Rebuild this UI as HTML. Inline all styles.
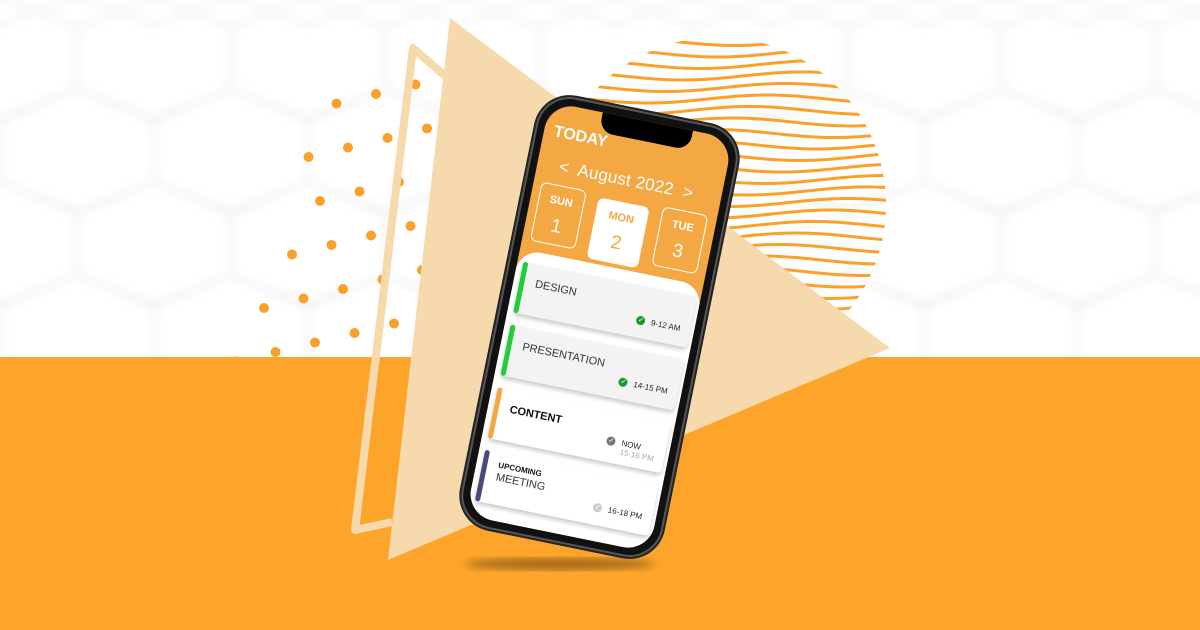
<!DOCTYPE html>
<html><head><meta charset="utf-8">
<style>
*{margin:0;padding:0;box-sizing:border-box}
body{width:1200px;height:630px;overflow:hidden;background:#fff;position:relative;font-family:"Liberation Sans",sans-serif}
svg.bg{position:absolute;left:0;top:0}
.phone{position:absolute;left:497px;top:107px;width:205px;height:440px;border-radius:34px;background:#111;border:2px solid #555;transform:rotate(11.5deg);box-shadow:0 0 0 2px #222}
.screen{position:absolute;left:7px;top:7px;right:7px;bottom:7px;border-radius:27px;overflow:hidden;background:#f3a844}
.notch{position:absolute;left:50%;top:-2px;width:92px;height:22px;margin-left:-40px;background:#000;border-radius:0 0 14px 14px}
.today{position:absolute;left:10px;top:20px;color:#fff;font-weight:bold;font-size:16px}
.month{position:absolute;left:22px;top:52px;color:#fff;font-size:17px;font-weight:300;letter-spacing:0.2px}
.day{position:absolute;top:80px;width:46px;height:60px;border:1px solid #fff;border-radius:6px;color:#fff;text-align:center}
.day b{display:block;font-size:11px;margin-top:9px}
.day span{display:block;font-size:19px;margin-top:9px}
.mon{background:#fff;color:#f3a844;top:84px;height:62px;width:52px}
.list{position:absolute;left:0;right:0;top:150px;bottom:0;background:#fff;border-radius:22px 22px 0 0}
.card{position:absolute;left:6px;right:4px;height:52px;background:#f3f3f3;border-radius:4px;box-shadow:0 3px 4px rgba(0,0,0,.2);font-size:11px;color:#333}
.card.w{background:#fff}
.bar{position:absolute;left:0;top:0;bottom:0;width:5px;border-radius:3px}
.t{position:absolute;left:16px;top:14px}
.r{position:absolute;right:10px;top:30px;font-size:8px;color:#222}
.ck{display:inline-block;width:9px;height:9px;border-radius:50%;background:#1a9a2e;color:#fff;font-size:7px;line-height:9px;text-align:center;margin-right:6px;vertical-align:middle}
</style></head><body>
<svg class="bg" width="1200" height="630" viewBox="0 0 1200 630">
<defs>
<filter id="bl"><feGaussianBlur stdDeviation="5"/></filter>
<filter id="bl2"><feGaussianBlur stdDeviation="4"/></filter>
<clipPath id="wc"><circle cx="718" cy="205" r="168"/></clipPath>
<clipPath id="top"><rect x="0" y="0" width="1200" height="357"/></clipPath>
</defs>
<g id="hex" clip-path="url(#top)" fill="none" stroke="#f1f1f1" stroke-width="4" filter="url(#bl)"></g>
<g id="wav" clip-path="url(#wc)" fill="none" stroke="#f9a12a" stroke-width="3"></g>
<g id="dots" fill="#f9a12a"></g>
<rect x="0" y="357" width="1200" height="273" fill="#fda52a"/>
<polygon points="450,18 890,348 388,560" fill="#f6d9ac"/>
<polyline points="452,82 413,48 355,530 392,522" fill="none" stroke="#f6d9ac" stroke-width="8" stroke-linejoin="round"/>
<ellipse cx="560" cy="564" rx="95" ry="6" fill="#000" opacity=".35" filter="url(#bl2)"/>
</svg>
<div class="phone"><div class="screen">
<div class="notch"></div>
<div class="today">TODAY</div>
<div class="month">&lt;&nbsp; August 2022 &nbsp;&gt;</div>
<div class="day" style="left:8px"><b>SUN</b><span>1</span></div>
<div class="day mon" style="left:67px"><b>MON</b><span>2</span></div>
<div class="day" style="left:132px"><b>TUE</b><span>3</span></div>
<div class="list">
<div class="card" style="top:12px"><div class="bar" style="background:#22cc3a"></div><div class="t">DESIGN</div><div class="r"><span class="ck">✓</span>9-12 AM</div></div>
<div class="card" style="top:76px"><div class="bar" style="background:#22cc3a"></div><div class="t">PRESENTATION</div><div class="r"><span class="ck">✓</span>14-15 PM</div></div>
<div class="card w" style="top:140px"><div class="bar" style="background:#f3a844"></div><div class="t" style="font-weight:bold;color:#111">CONTENT</div><div class="r" style="top:26px"><span class="ck" style="background:#777">✓</span>NOW<br><span style="color:#aaa;margin-left:15px">15-16 PM</span></div></div>
<div class="card w" style="top:204px"><div class="bar" style="background:#4a4a7a"></div><div class="t" style="top:6px;line-height:13px"><b style="font-size:8px;color:#111">UPCOMING</b><br>MEETING</div><div class="r"><span class="ck" style="background:#ccc">✓</span>16-18 PM</div></div>
</div>
</div></div>
<script>
var ns="http://www.w3.org/2000/svg";
var hg=document.getElementById("hex");
for(var j=-1;j<6;j++)for(var i=-1;i<9;i++){var cx=154+i*154+(j%2?77:0)-(j<0?77:0),cy=150+(j-1)*93;
var p=[[0,-61],[77,-29],[77,32],[0,61],[-77,32],[-77,-29]].map(function(a){return (cx+a[0])+","+(cy+a[1])}).join(" ");
var e=document.createElementNS(ns,"polygon");e.setAttribute("points",p);hg.appendChild(e);}
var wg=document.getElementById("wav");
for(var y=30;y<380;y+=11.5){var d="M500 "+y;for(var x=500;x<=900;x+=4){d+=" L"+x+" "+(y+4*Math.sin((x-500)/38+y/25));}
var e=document.createElementNS(ns,"path");e.setAttribute("d",d);wg.appendChild(e);}
var dg=document.getElementById("dots");
for(var j=0;j<7;j++)for(var i=-2;i<=(j<2?j+1:j);i++){var x=376-39.5*i+11.5*j,y=94+9.5*i+44*j;
if(x>445||y>365||y<80)continue;var c=document.createElementNS(ns,"circle");c.setAttribute("cx",x);c.setAttribute("cy",y);c.setAttribute("r",5);dg.appendChild(c);}
</script>
</body></html>
